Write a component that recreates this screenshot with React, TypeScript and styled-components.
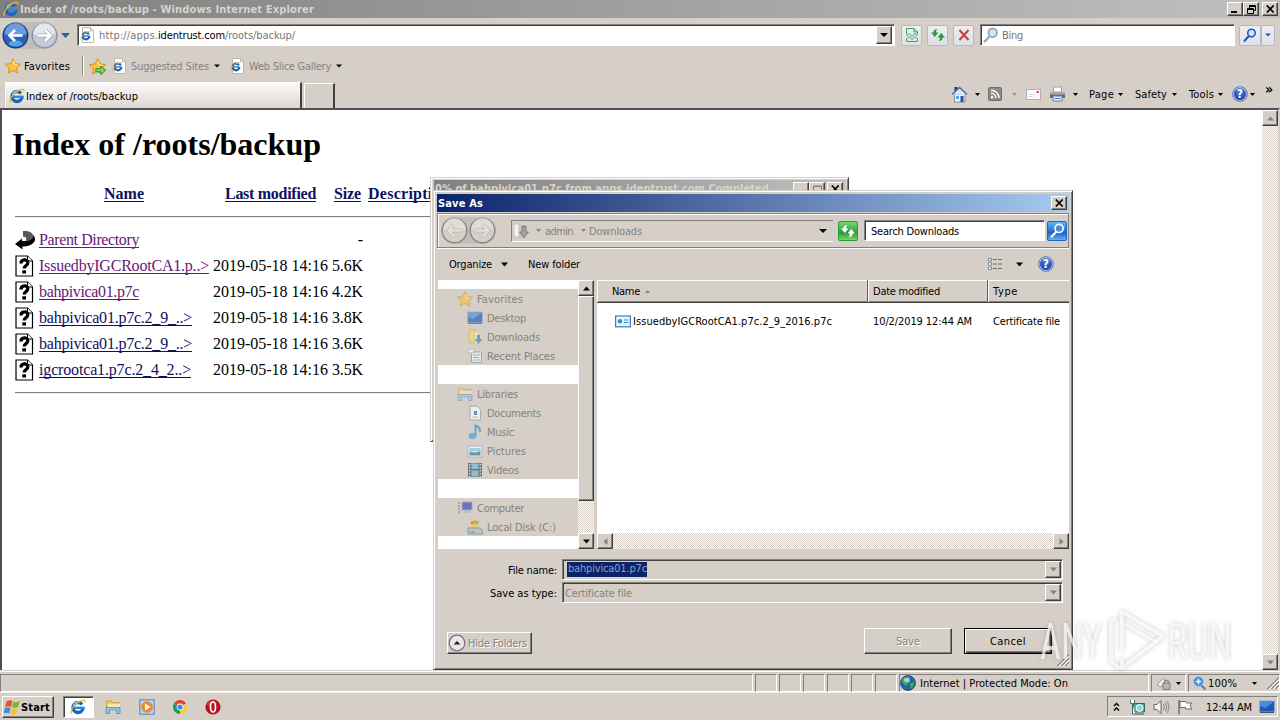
import React, { useLayoutEffect, useRef, useState } from "react";
import styled, { createGlobalStyle, css } from "styled-components";

const face = "#d5cfc7";

const Global = createGlobalStyle`
  * { box-sizing: border-box; }
  html, body { margin: 0; padding: 0; width: 1280px; height: 720px; overflow: hidden; background: ${face}; }
  body { --drop: 2px; font: 11px/14px "DejaVu Sans Condensed", "DejaVu Sans", sans-serif; font-stretch: condensed; color: #000; }
  svg { display: block; flex: none; }
`;

/* Text that is tracked so that its run is exactly w pixels wide. */
const FitSpan = styled.span<{ $w: number; $c?: string; $b?: boolean; $ml?: number; $emboss?: boolean }>`
  display: inline-block;
  flex: none;
  width: ${(p) => p.$w}px;
  padding-top: var(--drop);
  margin-left: ${(p) => p.$ml ?? 0}px;
  white-space: pre;
  color: ${(p) => p.$c ?? "inherit"};
  font-weight: ${(p) => (p.$b ? "bold" : "inherit")};
  text-shadow: ${(p) => (p.$emboss ? "1px 1px 0 #fff" : "none")};
`;

type FitProps = { w: number; children: string; c?: string; b?: boolean; ml?: number; emboss?: boolean };
function Fit({ w, children, c, b, ml, emboss }: FitProps) {
  const ref = useRef<HTMLSpanElement>(null);
  const [ls, setLs] = useState(0);
  useLayoutEffect(() => {
    const inner = ref.current;
    if (inner) setLs((w - inner.getBoundingClientRect().width) / children.length);
  }, [w, children]);
  return (
    <FitSpan $w={w} $c={c} $b={b} $ml={ml} $emboss={emboss} style={{ letterSpacing: ls }}>
      <span ref={ref}>{children}</span>
    </FitSpan>
  );
}

const raised = css`
  background: ${face};
  border: 1px solid;
  border-color: #fff #404040 #404040 #fff;
  box-shadow: inset -1px -1px 0 #808080;
`;
const sunken = css`
  border: 1px solid;
  border-color: #808080 #fff #fff #808080;
  box-shadow: inset 1px 1px 0 #404040;
`;

const Screen = styled.div`
  position: relative;
  width: 1280px;
  height: 720px;
  overflow: hidden;
  background: ${face};
  display: flex;
  flex-direction: column;
`;
const Gap = styled.i<{ $w: number }>`
  flex: none;
  width: ${(p) => p.$w}px;
`;
const Spacer = styled.i`
  flex: 1;
`;
const ArrowSvg = styled.svg<{ $ml?: number }>`
  margin-left: ${(p) => p.$ml ?? 0}px;
`;
function Arrow({ ml = 0, c = "#000", s = 5, dir = 0 }: { ml?: number; c?: string; s?: number; dir?: number }) {
  const h = Math.ceil(s / 2);
  return (
    <ArrowSvg $ml={ml} width={s} height={s} viewBox={`0 0 ${s} ${s}`}>
      <path transform={`rotate(${dir} ${s / 2} ${s / 2})`} d={`M0 ${(s - h) / 2}H${s}L${s / 2} ${(s - h) / 2 + h}Z`} fill={c} />
    </ArrowSvg>
  );
}

/* ---------- icons ---------- */
const IE = ({ s = 16 }: { s?: number }) => (
  <svg width={s} height={s} viewBox="0 0 16 16" fill="none">
    <circle cx="8" cy="8.500" r="5" stroke="#1b64c4" strokeWidth="3.400" strokeDasharray="27.500 4" />
    <path d="M5 8.800H14.600" stroke="#2f86e0" strokeWidth="2.400" />
    <path d="M3.500 7A5 5 0 0 1 9 3" stroke="#6cc0fa" strokeWidth="1.600" />
    <path d="M1.600 14.800C-.6 12.600 4 5 9.600 2.400C13 .8 15.600 1 14.800 3.700" stroke="#f2b91f" strokeWidth="1.300" />
  </svg>
);
const PageIE = () => (
  <svg width="15" height="16" viewBox="0 0 15 16" fill="none">
    <path d="M2.500.5H10.500L13.500 3.500V15.500H2.500Z" fill="#fff" stroke="#b8b8b8" />
    <path d="M10.500.5V3.500H13.500" stroke="#b8b8b8" />
    <circle cx="6" cy="9" r="3.300" stroke="#1c62bd" strokeWidth="2.200" strokeDasharray="18.500 3" />
    <path d="M3.500 9H9.500" stroke="#2f86e0" strokeWidth="1.500" />
    <path d="M1 13C0 10 6 4 10.500 4.500" stroke="#e9b52c" />
  </svg>
);
const Star = ({ add, s = 16, dim }: { add?: boolean; s?: number; dim?: boolean }) => (
  <svg width={s} height={s} viewBox="0 0 16 16" opacity={dim ? 0.6 : 1}>
    <path d="M8 .8L10.300 5.600L15.500 6.200L11.700 9.800L12.600 15L8 12.400L3.400 15L4.300 9.800L.5 6.200L5.700 5.600Z" fill="#fdc23e" stroke="#d98a12" strokeWidth=".9" />
    <path d="M8 3L9.500 6.500L12.500 7" fill="none" stroke="#fff0b0" strokeWidth="1.200" />
    {add && <path d="M6.500 10H11V7.500L15.800 11.500L11 15.500V13H6.500Z" fill="#7fd84f" stroke="#2e8a1f" strokeWidth=".9" />}
  </svg>
);
const Magnifier = ({ s = 16, c = "#1f58c7", glass = "#cfe6fb" }: { s?: number; c?: string; glass?: string }) => (
  <svg width={s} height={s} viewBox="0 0 16 16" fill="none">
    <path d="M6.500 9.500L1.800 14.500" stroke={c} strokeWidth="2.400" strokeLinecap="round" />
    <circle cx="9.700" cy="5.800" r="4.300" fill={glass} stroke={c} strokeWidth="1.800" />
  </svg>
);
const HelpBall = styled.span`
  flex: none;
  width: 16px;
  height: 16px;
  border-radius: 50%;
  border: 1px solid #7b8cb8;
  background: radial-gradient(circle at 50% 30%, #4f86e8, #16399f 75%);
  box-shadow: inset 0 0 0 1px #b9c8ee;
  color: #fff;
  text-align: center;
  font-size: 12px;
  line-height: 14px;
`;
const Help = () => (
  <HelpBall>
    <b>?</b>
  </HelpBall>
);
const Home = () => (
  <svg width="17" height="17" viewBox="0 0 17 17">
    <path d="M3.500 8H14V16H3.500Z" fill="#f2f5fb" stroke="#7f8fb0" />
    <path d="M3.500 1H6.500V6H3.500Z" fill="#27348f" />
    <path d="M1 8.500L8.500 1.500L16 8.500" fill="#dce6f7" stroke="#4a68ac" strokeWidth="1.600" />
    <path d="M9.500 10H12.500V16H9.500Z" fill="#1d4f9e" />
    <path d="M5 10H8V13H5Z" fill="#5ea3e0" />
  </svg>
);
const Rss = () => (
  <svg width="14" height="14" viewBox="0 0 14 14" fill="none">
    <rect x=".5" y=".5" width="13" height="13" rx="1.500" fill="#8c8c8c" stroke="#6e6e6e" />
    <circle cx="4" cy="10.200" r="1.200" fill="#fff" />
    <path d="M3 6.300A4.800 4.800 0 0 1 7.800 11M3 3.200A8 8 0 0 1 11 11" stroke="#fff" strokeWidth="1.400" />
  </svg>
);
const Mail = () => (
  <svg width="15" height="11" viewBox="0 0 15 11">
    <rect x=".5" y=".5" width="14" height="10" fill="#fafafa" stroke="#b3aeb0" />
    <path d="M10.500 2H13V4H10.500Z" fill="#d2536a" />
    <path d="M3 5.500H8M3 7.500H7" stroke="#d9d9e2" />
  </svg>
);
const Printer = () => (
  <svg width="17" height="16" viewBox="0 0 17 16">
    <path d="M4.500 1H12.500V6H4.500Z" fill="#fff" stroke="#9a9a9a" />
    <path d="M1 6H16V12H1Z" fill="#a9a9ad" />
    <path d="M1 8.500H16V12H1Z" fill="#68686e" />
    <path d="M4 10H13V15H4Z" fill="#e6eefb" stroke="#6d7a99" />
    <path d="M5.500 12.500H11.500" stroke="#2b7fd4" />
  </svg>
);
const BrokenPage = () => (
  <svg width="14" height="16" viewBox="0 0 14 16" fill="none" stroke="#3fa35a">
    <path d="M1.500 7.500V1.500H9L12.500 5V7.500M9 1.500V5H12.500" />
    <path d="M1.500 9L4 6.500L7 9.500L10 6.500L12.500 9M1.500 12L4 9.500L7 12.500L10 9.500L12.500 12V14.500H1.500Z" />
  </svg>
);
const Refresh = ({ c = "#2e9a35" }: { c?: string }) => (
  <svg width="16" height="14" viewBox="0 0 16 14">
    <path d="M7.500 1.200C4.500.8 3.500 2.200 3.500 4.500H1L4.800 9L8.500 4.500H6C6 2.800 6.200 2.200 7.500 1.200Z" fill={c} />
    <path d="M8.500 12.800C11.500 13.200 12.500 11.800 12.500 9.500H15L11.300 5L7.500 9.500H10C10 11.200 9.800 11.800 8.500 12.800Z" fill={c} />
  </svg>
);
const StopX = () => (
  <svg width="12" height="12" viewBox="0 0 12 12">
    <path d="M1.500 1L10.500 11M10.500 1L1.500 11" stroke="#c8443f" strokeWidth="2.200" />
  </svg>
);
const NavBall = ({ kind }: { kind: "back" | "forward" | "dimBack" | "dimForward" }) => {
  const fwd = kind === "forward" || kind === "dimForward";
  const fill = kind === "back" ? "#2b62b8" : kind === "forward" ? "#c3cbd8" : face;
  const glow = kind === "back" ? "#7db0ee" : kind === "forward" ? "#eef1f6" : "#e4e0da";
  const edge = kind === "back" ? "#1c3d7c" : kind === "forward" ? "#8b96aa" : "#8a8884";
  const blue = kind === "back";
  const dim = kind === "dimBack" || kind === "dimForward";
  return (
    <svg width="27" height="27" viewBox="0 0 27 27">
      <circle cx="13.500" cy="13.500" r="12.300" fill={fill} stroke={edge} strokeWidth="1.400" />
      <path d="M2.500 12A11 11 0 0 1 24.500 12Q13.500 16 2.500 12Z" fill={glow} opacity=".75" />
      {blue && <ellipse cx="13.500" cy="21.500" rx="7" ry="3" fill="#5cb4f2" opacity=".8" />}
      <g transform={fwd ? "rotate(180 13.500 13.500)" : undefined} fill="none">
        {!blue && <path d="M20.500 13.500H8M13 8L7.500 13.500L13 19" stroke={dim ? "#bab6b1" : "#a5a8ae"} strokeWidth="4" />}
        <path d="M20.500 13.500H8M13 8L7.500 13.500L13 19" stroke={dim ? "#e3dfda" : "#fff"} strokeWidth="2.600" />
      </g>
    </svg>
  );
};

/* ---------- window chrome ---------- */
const CapBtn = styled.span<{ $ml?: number }>`
  ${raised}
  flex: none;
  display: flex;
  align-items: center;
  justify-content: center;
  width: 16px;
  height: 14px;
  margin-left: ${(p) => p.$ml ?? 0}px;
`;
const CloseX = () => (
  <svg width="9" height="8" viewBox="0 0 9 8">
    <path d="M.8.500L7.700 7.500M7.700.500L.8 7.500" stroke="#000" strokeWidth="1.700" />
  </svg>
);
const Minimize = () => (
  <svg width="8" height="8" viewBox="0 0 8 8">
    <path d="M0 6H6V8H0Z" />
  </svg>
);
const Restore = () => (
  <svg width="9" height="9" viewBox="0 0 9 9" fill="none" stroke="#000">
    <path d="M2.500 3V.500H8.500V5.500H6.500M2.500 1.500H8.500M.5 3.500H6.500V8.500H.5ZM.5 4.500H6.500" />
  </svg>
);
const TitleBar = styled.div`
  --drop: 1px;
  flex: none;
  height: 18px;
  display: flex;
  align-items: center;
  padding: 0 2px 0 3px;
  background: linear-gradient(90deg, #808080, #c0c0c0);
  color: #d8d2ca;
`;
const NavRow = styled.div`
  flex: none;
  height: 34px;
  display: flex;
  align-items: center;
  padding: 0 6px 0 2px;
`;
const NavPill = styled.div<{ $gap?: number }>`
  display: flex;
  gap: ${(p) => p.$gap ?? 1}px;
  border-radius: 14px;
  background: #c2bfba;
`;
const AddressField = styled.div<{ $w: number }>`
  ${sunken}
  background: #fff;
  width: ${(p) => p.$w}px;
  height: 22px;
  display: flex;
  align-items: center;
  padding: 1px 2px;
  color: #767676;
  flex: none;
`;
const DropBtn = styled.span<{ $h?: number }>`
  ${raised}
  width: 16px;
  height: ${(p) => p.$h ?? 18}px;
  display: flex;
  align-items: center;
  justify-content: center;
  flex: none;
`;
const ToolBtn = styled.span<{ $ml?: number; $w?: number }>`
  flex: none;
  width: ${(p) => p.$w ?? 21}px;
  height: 21px;
  margin-left: ${(p) => p.$ml ?? 0}px;
  display: flex;
  align-items: center;
  justify-content: center;
  border: 1px solid #b4bac4;
  border-radius: 2px;
  background: linear-gradient(#eceef2, #dde1e8);
`;
const FavRow = styled.div`
  flex: none;
  height: 28px;
  display: flex;
  align-items: center;
  padding: 0 0 0 5px;
`;
const FavSep = styled.i`
  width: 2px;
  height: 20px;
  border-left: 1px solid #8f8b86;
  border-right: 1px solid #fff;
  margin: 0 5px 0 12px;
`;
const TabRow = styled.div`
  flex: none;
  height: 28px;
  display: flex;
  align-items: flex-end;
  padding: 0 3px 0 5px;
`;
const Tab = styled.div`
  width: 297px;
  height: 26px;
  display: flex;
  align-items: center;
  padding-left: 3px;
  background: linear-gradient(#fbfaf9, #dcd7d0);
  border-top: 1px solid #fff;
  border-left: 1px solid #fff;
  border-right: 2px solid #404040;
`;
const NewTab = styled.div`
  width: 31px;
  height: 25px;
  margin-left: 2px;
  border: 1px solid #fff;
  border-right: 2px solid #404040;
  border-bottom: 0;
`;
const Commands = styled.div`
  display: flex;
  align-items: center;
  height: 28px;
  width: 326px;
`;
const Chevrons = styled.span`
  align-self: flex-start;
  margin-left: 10px;
  font-size: 14px;
`;

/* ---------- page ---------- */
const PageFrame = styled.div`
  flex: none;
  height: 562px;
  display: flex;
  border-left: 2px solid #505050;
  border-top: 2px solid #505050;
  border-right: 2px solid ${face};
  background: #fff;
`;
const Document = styled.div`
  --drop: 0px;
  flex: 1;
  padding: 15px 0 0 10px;
  font: 16px/20px "Liberation Serif", serif;
`;
const Heading = styled.h1`
  margin: 0;
  font-size: 32px;
  line-height: 38px;
`;
const Rule = styled.div`
  width: 430px;
  height: 2px;
  margin-left: 3px;
  border-top: 1px solid #808080;
  border-bottom: 1px solid #ececec;
`;
const Listing = styled.div`
  display: grid;
  grid-template-columns: 20px 170px 115px 31px 84px;
  column-gap: 4px;
  margin-left: 3px;
  align-items: center;
`;
const HeadListing = styled(Listing)`
  margin-top: 21px;
  height: 20px;
  margin-bottom: 12px;
  justify-items: center;
`;
const FileListing = styled(Listing)`
  grid-auto-rows: 26px;
  margin: 9px 0 9px 3px;
`;
const Anchor = styled.span<{ $c: string; $bold?: boolean; $start?: boolean }>`
  color: ${(p) => p.$c};
  font-weight: ${(p) => (p.$bold ? "bold" : "normal")};
  justify-self: ${(p) => (p.$start ? "start" : "auto")};
  margin-left: ${(p) => (p.$start ? 1 : 0)}px;
  & > span > span {
    text-decoration: underline;
    text-decoration-skip-ink: none;
    text-underline-offset: 2px;
  }
`;
const Right = styled.span`
  justify-self: end;
`;
const UnknownFile = () => (
  <svg width="20" height="22" viewBox="0 0 20 22">
    <path d="M1 1H12.500L17.500 6V21H1Z" fill="#fff" stroke="#000" strokeWidth="1.200" />
    <path d="M12.500 1V6H17.500" fill="#fff" stroke="#000" />
    <path d="M6 8.500C6 3.800 12.800 3.800 12.800 7.700C12.800 10.800 9.200 10.300 9.200 13.500" fill="none" stroke="#000" strokeWidth="3.300" />
    <path d="M7.300 15.300H11V18.500H7.300Z" />
  </svg>
);
const BackIcon = () => (
  <svg width="20" height="22" viewBox="0 0 20 22">
    <path d="M0 15L7 9.500V12C12 12.500 17 11 18.500 6Q21 10 19.500 12.500Q16 17.500 7.500 17.500V20.500Z" fill="#000" />
    <path d="M8 2C13 1.500 18 3 18.500 7.500C17 11 13.500 12 11 12V8.500L8 7.500Z" fill="#5a5a5a" />
  </svg>
);
const dither = css`
  background: repeating-conic-gradient(#fff 0 25%, ${face} 0 50%) 0 0 / 2px 2px;
`;
const VScroll = styled.div`
  ${dither}
  width: 16px;
  flex: none;
  display: flex;
  flex-direction: column;
  justify-content: space-between;
`;
const HScroll = styled.div`
  ${dither}
  height: 16px;
  flex: none;
  display: flex;
  justify-content: space-between;
`;
const ScrollBtn = styled.span`
  ${raised}
  width: 16px;
  height: 16px;
  display: flex;
  align-items: center;
  justify-content: center;
  flex: none;
`;
const Thumb = styled.span`
  ${raised}
  height: 205px;
  flex: none;
  margin-bottom: auto;
`;

/* ---------- status bar & taskbar ---------- */
const StatusBar = styled.div`
  flex: none;
  height: 20px;
  margin-top: 2px;
  display: flex;
  gap: 2px;
  border-bottom: 1px solid #fff;
  box-shadow: 0 -1px 0 #fff;
`;
const Panel = styled.div<{ $w: number }>`
  flex: none;
  width: ${(p) => p.$w}px;
  height: 18px;
  margin-top: 2px;
  display: flex;
  align-items: center;
  border: 1px solid;
  border-color: #808080 #fff #fff #808080;
`;
const TaskBar = styled.div`
  flex: 1;
  display: flex;
  align-items: flex-start;
  padding: 3px 2px 0 2px;
  border-top: 1px solid #f2f0ed;
`;
const StartBtn = styled.div`
  ${raised}
  width: 52px;
  height: 22px;
  display: flex;
  align-items: center;
  padding-left: 1px;
`;
const TaskBtn = styled.div`
  ${sunken}
  width: 31px;
  height: 22px;
  margin: 0 11px 0 9px;
  display: flex;
  align-items: center;
  padding-left: 6px;
  background: #fff;
`;
const Quick = styled.div`
  display: flex;
  gap: 18px;
  height: 22px;
  align-items: center;
`;
const Tray = styled.div`
  width: 171px;
  height: 21px;
  display: flex;
  align-items: center;
  padding-left: 5px;
  border: 1px solid;
  border-color: #808080 #fff #fff #808080;
`;
const Flag = () => (
  <svg width="16" height="16" viewBox="0 0 16 16">
    <path d="M2.500 2.500Q5.500.5 8.500 2L7 8Q4 6.500 1 8.500Z" fill="#e8542d" />
    <path d="M9.500 2.500Q12 4 15.800 2L14.200 8Q11 9.500 8 8.300Z" fill="#7cb82f" />
    <path d="M.8 9.500Q3.800 7.500 6.600 9L5 14.500Q2.500 13-.8 15Z" fill="#3b8fdc" />
    <path d="M7.700 9.300Q10.800 10.800 13.900 9.200L12.300 15Q9 16.500 6.100 14.700Z" fill="#f6c12d" />
  </svg>
);
const Explorer = ({ dim }: { dim?: boolean }) => (
  <svg width="16" height="16" viewBox="0 0 16 16" opacity={dim ? 0.6 : 1}>
    <path d="M1.500 2H6L7 3.500H14V9H1.500Z" fill="#f0cf6a" stroke="#c9a23e" />
    <path d="M3 5H15V12H3Z" fill="#f9e9a6" />
    <path d="M1 8.500H15V14.500H11.500V11H4.500V14.500H1Z" fill="#8cc4ec" stroke="#4b8cc4" strokeWidth=".8" />
  </svg>
);
const MediaPlayer = () => (
  <svg width="16" height="16" viewBox="0 0 16 16">
    <rect x=".8" y=".8" width="14.400" height="14.400" fill="#b9d6f0" stroke="#5893cf" strokeWidth="1.200" />
    <circle cx="8" cy="8" r="5.800" fill="#f28a1d" />
    <path d="M6 4.500L11.500 8L6 11.500Z" fill="#fff" />
  </svg>
);
const Chrome = () => (
  <svg width="14" height="14" viewBox="0 0 14 14">
    <path d="M7 7L.9 3.500A7 7 0 0 1 13.100 3.500Z" fill="#db4437" />
    <path d="M7 7V14A7 7 0 0 1 .9 3.500Z" fill="#1b9e58" />
    <path d="M7 7L13.100 3.500A7 7 0 0 1 7 14Z" fill="#fbcb3b" />
    <circle cx="7" cy="7" r="3.400" fill="#fff" />
    <circle cx="7" cy="7" r="2.600" fill="#4285f4" />
  </svg>
);
const Opera = () => (
  <svg width="16" height="16" viewBox="0 0 16 16">
    <circle cx="8" cy="8" r="7.600" fill="#b3151b" />
    <ellipse cx="6.500" cy="4.500" rx="5" ry="3" fill="#df4a4e" opacity=".6" />
    <ellipse cx="8" cy="8" rx="2.500" ry="5" fill="#b3151b" stroke="#fff" strokeWidth="1.700" />
  </svg>
);
const Globe = () => (
  <svg width="16" height="16" viewBox="0 0 16 16">
    <circle cx="8" cy="8" r="7.500" fill="#1f62b5" stroke="#173e78" strokeWidth=".7" />
    <path d="M2 4.500Q6 0 10 2L8 5L9.500 7L6 11L2.500 8ZM10 8L14.500 7Q14 12 10.500 14Z" fill="#3fae49" />
    <ellipse cx="7" cy="5" rx="3" ry="2.300" fill="#c7ecf7" opacity=".7" />
  </svg>
);
const Shield = () => (
  <svg width="15" height="15" viewBox="0 0 15 15">
    <path d="M1 9L7 2L9 5L5 11Z" fill="#eee" stroke="#999" />
    <path d="M8.500 7V5.500Q10.500 3 12.500 5.500V7" fill="none" stroke="#888" strokeWidth="1.300" />
    <path d="M7 7H14V13.500H7Z" fill="#b5b5b5" stroke="#808080" />
  </svg>
);
const ZoomIn = () => (
  <svg width="14" height="15" viewBox="0 0 14 15">
    <path d="M8 9L12.500 13.500" stroke="#6d7fa8" strokeWidth="2.200" />
    <circle cx="5.500" cy="5.500" r="4.700" fill="#3987e6" stroke="#8cb4e8" />
    <path d="M5.500 2.800V8.200M2.800 5.500H8.200" stroke="#fff" strokeWidth="1.500" />
  </svg>
);
const Grip = () => (
  <svg width="12" height="12" viewBox="0 0 12 12">
    <path d="M2 12L12 2M6 12L12 6M10 12L12 10" stroke="#fff" strokeWidth="1.200" />
    <path d="M.5 12L12 .5M4.500 12L12 4.500M8.500 12L12 8.500" stroke="#808080" strokeWidth="1.200" />
  </svg>
);
const Network = () => (
  <svg width="16" height="16" viewBox="0 0 16 16">
    <path d="M4.500 4.500H15.500V13H4.500Z" fill="#4fa79e" stroke="#35665f" />
    <circle cx="10.500" cy="9" r="3.500" fill="#7fe0d8" stroke="#fff" />
    <path d="M6 15H15" stroke="#555" />
    <path d="M1.500 1V4.500H5.500V1M3.500 4.500V15H6" fill="#fff" stroke="#4e6b68" />
  </svg>
);
const Speaker = () => (
  <svg width="17" height="16" viewBox="0 0 17 16" fill="none">
    <path d="M1 5.500H4L8 1.500V14.500L4 10.500H1Z" fill="#f4f4f4" stroke="#6a6a6a" />
    <path d="M10.500 5Q12 8 10.500 11M12.500 3.500Q15 8 12.500 12.500M14.500 2Q17.500 8 14.500 14" stroke="#8b8b8b" />
  </svg>
);
const ActionFlag = () => (
  <svg width="16" height="16" viewBox="0 0 16 16">
    <path d="M2 1V15.500" stroke="#777" strokeWidth="1.600" />
    <path d="M3 2.500H8.500L9.500 4H15L13 7L15 10H8.500V8.500H3Z" fill="#fff" stroke="#6a6a6a" />
  </svg>
);
const Monitor = ({ w = 16, dim }: { w?: number; dim?: boolean }) => (
  <svg width={w} height="14" viewBox="0 0 16 14" opacity={dim ? 0.65 : 1}>
    <rect x=".5" y="1" width="15" height="11" fill="#1e57b4" stroke="#8aa9d4" />
    <path d="M1 1.500H15L6 8L1 6Z" fill="#5fa1ec" opacity=".7" />
    <path d="M1 12.500H15" stroke="#44536e" />
  </svg>
);
const TrayChevron = () => (
  <svg width="7" height="10" viewBox="0 0 7 10" fill="none" stroke="#000" strokeWidth="1.400">
    <path d="M1 4L3.500 1.500L6 4M1 8.500L3.500 6L6 8.500" />
  </svg>
);

/* ---------- overlapping windows ---------- */
const ProgressWindow = styled.div`
  position: absolute;
  left: 430px;
  top: 177px;
  width: 419px;
  height: 265px;
  padding: 2px;
  background: ${face};
  border: 1px solid;
  border-color: ${face} #404040 #404040 ${face};
  box-shadow: inset 1px 1px 0 #fff, inset -1px -1px 0 #808080;
`;
const ProgressTitle = styled(TitleBar)`
  --drop: 0px;
  padding: 0 2px 0 1px;
  margin: 0 1px;
`;
const Dialog = styled.div`
  position: absolute;
  left: 433px;
  top: 190px;
  width: 640px;
  height: 480px;
  padding: 3px 3px 0 3px;
  background: ${face};
  border: 1px solid;
  border-color: ${face} #404040 #404040 ${face};
  box-shadow: inset 1px 1px 0 #fff, inset -1px -1px 0 #808080;
  display: flex;
  flex-direction: column;
`;
const DialogTitle = styled.div`
  flex: none;
  height: 18px;
  display: flex;
  align-items: center;
  justify-content: space-between;
  padding: 0 2px 0 1px;
  color: #fff;
  background: linear-gradient(90deg, #0a246a, #a6caf0);
`;
const DialogNav = styled.div`
  flex: none;
  height: 35px;
  margin-top: 1px;
  display: flex;
  align-items: center;
  padding: 0 0 0 3px;
  border: 1px solid #808080;
  box-shadow: inset 1px 1px 0 #fff, 0 1px 0 #fff;
`;
const Crumbs = styled.div`
  width: 322px;
  height: 22px;
  margin-left: 15px;
  display: flex;
  align-items: center;
  color: #85827e;
  border-top: 1px solid #808080;
  border-left: 1px solid #808080;
  border-bottom: 1px solid #fff;
`;
const GlossBtn = styled.span<{ $hue: string; $hi: string; $ml: number }>`
  width: 20px;
  height: 20px;
  margin-left: ${(p) => p.$ml}px;
  display: flex;
  align-items: center;
  justify-content: center;
  border: 1px solid ${(p) => p.$hue};
  border-radius: 2px;
  background: linear-gradient(${(p) => p.$hi}, ${(p) => p.$hue} 60%, ${(p) => p.$hi});
`;
const SearchBox = styled.div`
  ${sunken}
  background: #fff;
  width: 181px;
  height: 21px;
  margin-left: 6px;
  display: flex;
  align-items: center;
  padding-left: 6px;
`;
const CommandRow = styled.div`
  --drop: 1px;
  flex: none;
  height: 32px;
  display: flex;
  align-items: center;
  padding: 0 15px 0 12px;
`;
const Browser = styled.div`
  flex: none;
  height: 269px;
  display: flex;
`;
const Tree = styled.div`
  width: 141px;
  margin-left: 1px;
  background: #fff;
  padding-top: 9px;
  display: flex;
  flex-direction: column;
  gap: 19px;
`;
const TreeGroup = styled.div`
  background: ${face};
  color: #85827e;
`;
const TreeItem = styled.div<{ $child?: boolean }>`
  height: 19px;
  display: flex;
  align-items: center;
  gap: 4px;
  padding-left: ${(p) => (p.$child ? 29 : 19)}px;
`;
const Files = styled.div`
  width: 472px;
  margin-left: 3px;
  background: #fff;
  display: flex;
  flex-direction: column;
`;
const FilesHead = styled.div`
  display: flex;
  height: 23px;
  background: ${face};
  border-bottom: 1px solid #404040;
  box-shadow: inset 0 -1px 0 #808080, inset 0 1px 0 #fff;
`;
const HeadCell = styled.div<{ $w: number; $pl: number; $last?: boolean }>`
  width: ${(p) => p.$w}px;
  padding-left: ${(p) => p.$pl}px;
  display: flex;
  align-items: center;
  border-left: 1px solid #fff;
  border-right: ${(p) => (p.$last ? "0" : "1px solid #606060")};
`;
const FileRow = styled.div`
  height: 16px;
  margin: 10px 0 auto 18px;
  display: flex;
  align-items: center;
`;
const Fields = styled.div`
  display: grid;
  grid-template-columns: 120px 501px;
  column-gap: 5px;
  row-gap: 2px;
  margin: 10px 0 0 0;
`;
const FieldLabel = styled.div`
  display: flex;
  justify-content: flex-end;
  align-items: center;
`;
const Combo = styled.div`
  ${sunken}
  height: 21px;
  display: flex;
  align-items: center;
  justify-content: space-between;
  padding: 1px 1px 1px 2px;
  color: #85827e;
`;
const Selected = styled.span`
  --drop: 0px;
  background: #0a246a;
  color: #8f9fd0;
  height: 15px;
  margin-left: 2px;
  padding-left: 1px;
`;
const DialogFoot = styled.div`
  display: flex;
  align-items: flex-start;
  margin: 25px 0 0 10px;
`;
const HideBtn = styled.div`
  ${raised}
  width: 85px;
  height: 22px;
  margin-top: 4px;
  padding-left: 0;
  display: flex;
  align-items: center;
`;
const Button = styled.div<{ $ml: number; $def?: boolean }>`
  ${raised}
  --drop: 1px;
  width: 88px;
  height: 26px;
  margin-left: ${(p) => p.$ml}px;
  display: flex;
  align-items: center;
  justify-content: center;
  ${(p) => p.$def && css`
    border-color: #000;
    box-shadow: inset 1px 1px 0 #fff, inset -1px -1px 0 #404040, inset -2px -2px 0 #808080;
  `}
`;
const Corner = styled.div`
  position: absolute;
  right: 3px;
  bottom: 3px;
`;
const Watermark = styled.svg`
  position: absolute;
  left: 1036px;
  top: 604px;
  filter: drop-shadow(0 0 2px rgba(120, 116, 112, 0.5));
`;
const UpBall = () => (
  <svg width="18" height="18" viewBox="0 0 18 18">
    <circle cx="9" cy="9" r="7.800" fill="#e9e7e8" stroke="#77757c" strokeWidth="1.300" />
    <path d="M5.500 10.500L9 7L12.500 10.500Z" fill="#222" />
  </svg>
);
const DownFolder = () => (
  <svg width="18" height="18" viewBox="0 0 18 18">
    <path d="M2 2H7V15H2Z" fill="#f2f2f2" stroke="#c4c4c4" />
    <path d="M7 1L10 3V16L7 15Z" fill="#c9c7c5" />
    <path d="M10 4H14V10H16.500L12 16L7.500 10H10Z" fill="#a09e9c" stroke="#777" strokeWidth=".8" />
  </svg>
);
const Views = () => (
  <svg width="16" height="14" viewBox="0 0 16 14" fill="none">
    <path d="M1.500 1.500H4.500V4H1.500ZM1.500 5.700H4.500V8.200H1.500ZM1.500 10H4.500V12.500H1.500Z" fill="#fff" stroke="#7f8794" />
    <path d="M6 2.500H15M6 7H15M6 11.500H15" stroke="#6d6d73" strokeDasharray="4 1" />
  </svg>
);
const Certificate = () => (
  <svg width="16" height="13" viewBox="0 0 16 13">
    <rect x=".6" y="1" width="14.800" height="10.800" fill="#eaf6fd" stroke="#2c83b8" strokeWidth="1.200" />
    <circle cx="5" cy="6.200" r="2.300" fill="#3f8fc6" />
    <path d="M9 5H13.500M9 7.500H13.500" stroke="#3f8fc6" />
  </svg>
);

type Kind = "down" | "recent" | "doc" | "music" | "pic" | "video" | "pc" | "disk";
const SmallIcon = ({ kind }: { kind: Kind }) => (
  <svg width="16" height="16" viewBox="0 0 16 16" opacity=".65">
    {kind === "down" && <><path d="M2 1H8V14H2Z" fill="#f3d778" stroke="#d4b24a" /><path d="M8 3H11V14H8Z" fill="#fbecb0" /><path d="M10 6H13V10H15.500L11.500 15L7.500 10H10Z" fill="#2f88d0" /></>}
    {kind === "recent" && <><path d="M4.500 4H14.500V14.500H4.500Z" fill="#eef7fb" stroke="#8096a0" /><path d="M6 7H13M6 9.500H12M6 12H13" stroke="#7fa9bd" /><path d="M1 1H7V5H1Z" fill="#f6f6f6" stroke="#a6b8c0" /></>}
    {kind === "doc" && <><path d="M3 1H10L13.500 4.500V15H3Z" fill="#fff" stroke="#8596a5" /><path d="M7 6H10V10H7Z" fill="#2d6fb4" /><path d="M5 12H11" stroke="#9fb3c5" /></>}
    {kind === "music" && <><path d="M8.500 12V1.500Q13.500 3 13 8" fill="none" stroke="#2b8ac8" strokeWidth="2" /><ellipse cx="5.500" cy="12" rx="4" ry="3" fill="#3aa0dc" /></>}
    {kind === "pic" && <><rect x="1" y="3" width="14" height="11" fill="#fff" stroke="#91a9b6" /><path d="M2.500 5H13.500V9L8 8L2.500 10Z" fill="#8bcdf0" /><path d="M2.500 9L8 9.500L13.500 8.500V12.500H2.500Z" fill="#2f7890" /></>}
    {kind === "video" && <><path d="M1 1H15V15H1Z" fill="#3b4650" /><path d="M4.500 1.500H11.500V7H4.500ZM4.500 8.500H11.500V14.500H4.500Z" fill="#70b2dc" /><path d="M2.700 2V15M13.300 2V15" stroke="#dfe6ea" strokeWidth="1.300" strokeDasharray="1.500 1.500" /></>}
    {kind === "pc" && <><path d="M5 2H15V10H5Z" fill="#2a45c4" stroke="#8b96b8" /><path d="M8 10.500H13V13H7Z" fill="#aab3c2" /><path d="M1 3H3M1 6H3M1 9H3M1 12H3" stroke="#68759a" strokeWidth="1.500" /></>}
    {kind === "disk" && <><path d="M3 9L5 2Q8 .5 12 2L11 9Z" fill="#f1c944" /><path d="M4 2.500L7.500 1.500L7 5L3.500 5.500Z" fill="#e36a36" /><path d="M8 1.500L12 2.500L11 5.500L7.500 5Z" fill="#7fb53a" /><path d="M1 9H13L15.500 12V15H1Z" fill="#b5bfc6" stroke="#6e7f89" /><path d="M3 13H8" stroke="#3aae58" strokeWidth="1.500" /></>}
  </svg>
);

const visited = "#661a74";
const blue = "#10105e";
const files = [
  { name: "IssuedbyIGCRootCA1.p..>", w: 170, c: visited, size: "5.6K" },
  { name: "bahpivica01.p7c", w: 100, c: visited, size: "4.2K" },
  { name: "bahpivica01.p7c.2_9_..>", w: 153, c: blue, size: "3.8K" },
  { name: "bahpivica01.p7c.2_9_..>", w: 153, c: blue, size: "3.6K" },
  { name: "igcrootca1.p7c.2_4_2..>", w: 152, c: blue, size: "3.5K" },
];

export default function App() {
  return (
    <Screen>
      <Global />
      <TitleBar>
        <IE />
        <Fit w={294} b ml={1}>Index of /roots/backup - Windows Internet Explorer</Fit>
        <Spacer />
        <CapBtn><Minimize /></CapBtn>
        <CapBtn><Restore /></CapBtn>
        <CapBtn $ml={3}><CloseX /></CapBtn>
      </TitleBar>

      <NavRow>
        <NavPill $gap={2}><NavBall kind="back" /><NavBall kind="forward" /></NavPill>
        <Arrow ml={3} s={9} c="#2a5f9e" />
        <Gap $w={7} />
        <AddressField $w={818}>
          <PageIE />
          <Fit w={59} ml={4}>http://apps.</Fit>
          <Fit w={67} c="#000">identrust.com</Fit>
          <Fit w={70}>/roots/backup/</Fit>
          <Spacer />
          <DropBtn><Arrow s={8} /></DropBtn>
        </AddressField>
        <ToolBtn $ml={6}><BrokenPage /></ToolBtn>
        <ToolBtn $ml={5}><Refresh /></ToolBtn>
        <ToolBtn $ml={5}><StopX /></ToolBtn>
        <Gap $w={6} />
        <AddressField $w={255}>
          <Magnifier c="#98a8b4" />
          <Fit w={21} ml={3}>Bing</Fit>
        </AddressField>
        <ToolBtn $ml={4} $w={22}><Magnifier s={14} /></ToolBtn>
        <ToolBtn $w={14}><Arrow s={6} c="#225ca8" /></ToolBtn>
      </NavRow>

      <FavRow>
        <Star />
        <Fit w={46} ml={3}>Favorites</Fit>
        <FavSep />
        <Star add s={17} />
        <Gap $w={6} />
        <PageIE />
        <Fit w={78} ml={4} c="#85827e">Suggested Sites</Fit>
        <Arrow ml={5} s={6} />
        <Gap $w={10} />
        <PageIE />
        <Fit w={82} ml={4} c="#85827e">Web Slice Gallery</Fit>
        <Arrow ml={5} s={6} />
      </FavRow>

      <TabRow>
        <Tab>
          <IE />
          <Fit w={112} ml={1}>Index of /roots/backup</Fit>
        </Tab>
        <NewTab />
        <Spacer />
        <Commands>
          <Home />
          <Arrow ml={7} />
          <Gap $w={8} />
          <Rss />
          <Arrow ml={10} c="#9a9691" />
          <Gap $w={9} />
          <Mail />
          <Gap $w={8} />
          <Printer />
          <Arrow ml={7} />
          <Fit w={25} ml={11}>Page</Fit>
          <Arrow ml={4} />
          <Fit w={32} ml={12}>Safety</Fit>
          <Arrow ml={5} />
          <Fit w={25} ml={12}>Tools</Fit>
          <Arrow ml={4} />
          <Gap $w={9} />
          <Help />
          <Arrow ml={2} />
          <Chevrons><Fit w={9} b>»</Fit></Chevrons>
        </Commands>
      </TabRow>

      <PageFrame>
        <Document>
          <Heading><Fit w={309}>Index of /roots/backup</Fit></Heading>
          <HeadListing>
            <span />
            <Anchor $c={blue} $bold><Fit w={40}>Name</Fit></Anchor>
            <Anchor $c={blue} $bold><Fit w={91}>Last modified</Fit></Anchor>
            <Anchor $c={blue} $bold><Fit w={27}>Size</Fit></Anchor>
            <Anchor $c={blue} $bold $start><Fit w={82}>Description</Fit></Anchor>
          </HeadListing>
          <Rule />
          <FileListing>
            <BackIcon />
            <Anchor $c={visited}><Fit w={100}>Parent Directory</Fit></Anchor>
            <span />
            <Right>-</Right>
            <span />
            {files.map((f, i) => (
              <React.Fragment key={i}>
                <UnknownFile />
                <Anchor $c={f.c}><Fit w={f.w}>{f.name}</Fit></Anchor>
                <Fit w={115}>2019-05-18 14:16</Fit>
                <Right><Fit w={31}>{f.size}</Fit></Right>
                <span />
              </React.Fragment>
            ))}
          </FileListing>
          <Rule />
        </Document>
        <VScroll>
          <ScrollBtn><Arrow dir={180} s={7} c="#85827e" /></ScrollBtn>
          <ScrollBtn><Arrow s={7} c="#85827e" /></ScrollBtn>
        </VScroll>
      </PageFrame>

      <StatusBar>
        <Panel $w={753} />
        {[0, 1, 2, 3, 4].map((n) => <Panel key={n} $w={22} />)}
        <Panel $w={22} />
        <Panel $w={250}>
          <Globe />
          <Fit w={148} ml={4}>Internet | Protected Mode: On</Fit>
        </Panel>
        <Panel $w={35}>
          <Gap $w={4} /><Shield /><Arrow ml={5} />
        </Panel>
        <Panel $w={92}>
          <Gap $w={4} /><ZoomIn />
          <Fit w={29} ml={1}>100%</Fit>
          <Arrow ml={15} />
          <Spacer /><Grip />
        </Panel>
      </StatusBar>

      <TaskBar>
        <StartBtn><Flag /><Fit w={29} b ml={1}>Start</Fit></StartBtn>
        <TaskBtn><IE /></TaskBtn>
        <Quick><Explorer /><MediaPlayer /><Chrome /><Opera /></Quick>
        <Spacer />
        <Tray>
          <TrayChevron />
          <Gap $w={9} /><Network />
          <Gap $w={8} /><Speaker />
          <Gap $w={7} /><ActionFlag />
          <Fit w={46} ml={13}>12:44 AM</Fit>
          <Gap $w={7} /><Monitor />
        </Tray>
      </TaskBar>

      <ProgressWindow>
        <ProgressTitle>
          <Fit w={334} b>0% of bahpivica01.p7c from apps.identrust.com Completed</Fit>
          <Spacer />
          <CapBtn><Minimize /></CapBtn>
          <CapBtn>
            <svg width="9" height="9" viewBox="0 0 9 9"><path d="M.5 1H8.500V8.500H.5ZM.5 1.500H8.500" fill="none" stroke="#85827e" /></svg>
          </CapBtn>
          <CapBtn $ml={2}><CloseX /></CapBtn>
        </ProgressTitle>
      </ProgressWindow>

      <Dialog>
        <DialogTitle>
          <Fit w={45} b>Save As</Fit>
          <CapBtn><CloseX /></CapBtn>
        </DialogTitle>
        <DialogNav>
          <NavPill><NavBall kind="dimBack" /><NavBall kind="dimForward" /></NavPill>
          <Crumbs>
            <DownFolder />
            <Arrow ml={6} c="#85827e" />
            <Fit w={28} ml={4}>admin</Fit>
            <Arrow ml={8} c="#85827e" />
            <Fit w={53} ml={3}>Downloads</Fit>
            <Spacer />
            <Arrow s={8} /><Gap $w={6} />
          </Crumbs>
          <GlossBtn $hue="#2a9c35" $hi="#79d66f" $ml={5}><Refresh c="#fff" /></GlossBtn>
          <SearchBox><Fit w={88}>Search Downloads</Fit></SearchBox>
          <GlossBtn $hue="#1d63c8" $hi="#5eb6f2" $ml={2}><Magnifier s={15} c="#fff" glass="#3f8fe0" /></GlossBtn>
        </DialogNav>
        <CommandRow>
          <Fit w={43}>Organize</Fit>
          <Arrow ml={9} s={7} />
          <Fit w={52} ml={20}>New folder</Fit>
          <Spacer />
          <Views />
          <Arrow ml={13} s={7} />
          <Gap $w={15} />
          <Help />
        </CommandRow>
        <Browser>
          <Tree>
            <TreeGroup>
              <TreeItem><Star dim /><Fit w={46}>Favorites</Fit></TreeItem>
              <TreeItem $child><Monitor dim /><Fit w={39}>Desktop</Fit></TreeItem>
              <TreeItem $child><SmallIcon kind="down" /><Fit w={53}>Downloads</Fit></TreeItem>
              <TreeItem $child><SmallIcon kind="recent" /><Fit w={68}>Recent Places</Fit></TreeItem>
            </TreeGroup>
            <TreeGroup>
              <TreeItem><Explorer dim /><Fit w={41}>Libraries</Fit></TreeItem>
              <TreeItem $child><SmallIcon kind="doc" /><Fit w={54}>Documents</Fit></TreeItem>
              <TreeItem $child><SmallIcon kind="music" /><Fit w={27}>Music</Fit></TreeItem>
              <TreeItem $child><SmallIcon kind="pic" /><Fit w={39}>Pictures</Fit></TreeItem>
              <TreeItem $child><SmallIcon kind="video" /><Fit w={32}>Videos</Fit></TreeItem>
            </TreeGroup>
            <TreeGroup>
              <TreeItem><SmallIcon kind="pc" /><Fit w={47}>Computer</Fit></TreeItem>
              <TreeItem $child><SmallIcon kind="disk" /><Fit w={69}>Local Disk (C:)</Fit></TreeItem>
            </TreeGroup>
          </Tree>
          <VScroll>
            <ScrollBtn><Arrow dir={180} s={7} /></ScrollBtn>
            <Thumb />
            <ScrollBtn><Arrow s={7} /></ScrollBtn>
          </VScroll>
          <Files>
            <FilesHead>
              <HeadCell $w={271} $pl={14}><Fit w={28}>Name</Fit><Arrow ml={5} dir={180} c="#85827e" /></HeadCell>
              <HeadCell $w={120} $pl={4}><Fit w={67}>Date modified</Fit></HeadCell>
              <HeadCell $w={81} $pl={4} $last><Fit w={25}>Type</Fit></HeadCell>
            </FilesHead>
            <FileRow>
              <Certificate />
              <Fit w={199} ml={2}>IssuedbyIGCRootCA1.p7c.2_9_2016.p7c</Fit>
              <Fit w={99} ml={41}>10/2/2019 12:44 AM</Fit>
              <Fit w={67} ml={21}>Certificate file</Fit>
            </FileRow>
            <HScroll>
              <ScrollBtn><Arrow dir={90} s={7} c="#85827e" /></ScrollBtn>
              <ScrollBtn><Arrow dir={-90} s={7} c="#85827e" /></ScrollBtn>
            </HScroll>
          </Files>
        </Browser>
        <Fields>
          <FieldLabel><Fit w={49}>File name:</Fit></FieldLabel>
          <Combo>
            <Selected><Fit w={79}>bahpivica01.p7c</Fit></Selected>
            <DropBtn $h={17}><Arrow s={7} c="#85827e" /></DropBtn>
          </Combo>
          <FieldLabel><Fit w={67}>Save as type:</Fit></FieldLabel>
          <Combo>
            <Fit w={67}>Certificate file</Fit>
            <DropBtn $h={17}><Arrow s={7} c="#85827e" /></DropBtn>
          </Combo>
        </Fields>
        <DialogFoot>
          <HideBtn><UpBall /><Fit w={59} ml={2} c="#85827e" emboss>Hide Folders</Fit></HideBtn>
          <Button $ml={332}><Fit w={24} c="#85827e" emboss>Save</Fit></Button>
          <Button $ml={12} $def><Fit w={36}>Cancel</Fit></Button>
        </DialogFoot>
        <Corner><Grip /></Corner>
      </Dialog>

      <Watermark width="220" height="70" viewBox="0 0 220 70" fontFamily="Roboto, sans-serif" fontSize="50" overflow="visible">
        <g fill="#fff" fillOpacity=".7">
          <text x="4" y="55" textLength="62" lengthAdjust="spacingAndGlyphs">ANY</text>
          <text x="131" y="55" textLength="65" lengthAdjust="spacingAndGlyphs">RUN</text>
        </g>
        <g fill="none" stroke="#fff" strokeOpacity=".75" strokeWidth="4" strokeLinejoin="round">
          <path d="M80 14L75 18V57L84 65" />
          <path d="M86 46V8L127 32L86 64V54" />
          <path d="M88 20L122 39" strokeWidth="3" />
        </g>
      </Watermark>
    </Screen>
  );
}
